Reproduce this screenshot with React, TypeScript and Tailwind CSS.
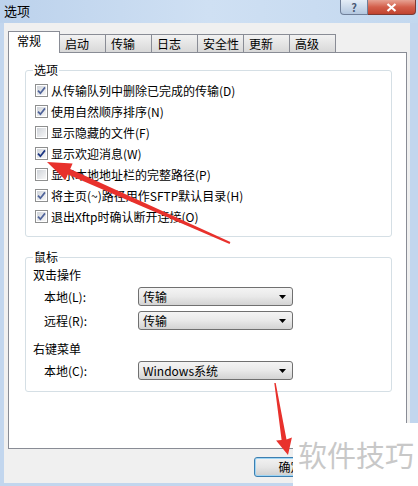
import React from 'react';

const tabs = ['常规', '启动', '传输', '日志', '安全性', '更新', '高级'];

const options = [
  { label: '从传输队列中删除已完成的传输(D)', checked: true },
  { label: '使用自然顺序排序(N)', checked: true },
  { label: '显示隐藏的文件(F)', checked: false },
  { label: '显示欢迎消息(W)', checked: true, focus: true },
  { label: '显示本地地址栏的完整路径(P)', checked: false },
  { label: '将主页(~)路径用作SFTP默认目录(H)', checked: true },
  { label: '退出Xftp时确认断开连接(O)', checked: true },
];

const CheckBox: React.FC<{ checked: boolean; focus?: boolean }> = ({ checked, focus }) => (
  <span className="w-[13px] h-[13px] shrink-0 border border-[#8e8f8f] bg-white p-[1px]">
    <span className="flex w-full h-full items-center justify-center bg-linear-to-br from-[#cfd3d9] to-[#f7f7f7]">
      {checked && (
        <svg width="9" height="9" viewBox="0 0 9 9">
          <path
            d="M1 4.6 L3.4 7.2 L8 1.4"
            fill="none"
            stroke={focus ? '#1c3682' : '#50649a'}
            strokeWidth="1.7"
          />
        </svg>
      )}
    </span>
  </span>
);

const ComboBox: React.FC<{ value: string }> = ({ value }) => (
  <div className="w-[155px] h-[19px] rounded-[3px] border border-[#707070] bg-linear-to-b from-[#f4f4f4] via-[#e9e9e9] to-[#d3d3d3] flex items-center pl-[4px] pr-[6px]">
    <span className="flex-1 text-[12px] leading-[14px]">{value}</span>
    <svg width="7" height="4" viewBox="0 0 7 4">
      <path d="M0 0 H7 L3.5 4 Z" fill="#000" />
    </svg>
  </div>
);

const SelectRow: React.FC<{ label: string; value: string; className?: string }> = ({ label, value, className }) => (
  <div className={`flex items-center h-[19px] ${className ?? ''}`}>
    <span className="w-[105px] pl-[11px] text-[12px]">{label}</span>
    <ComboBox value={value} />
  </div>
);

const App: React.FC = () => {
  return (
    <div className="relative w-[418px] h-[486px] overflow-hidden bg-[#c2d6ee] font-['Noto_Sans_CJK_SC',sans-serif] text-black flex flex-col">
      {/* title bar */}
      <div className="h-[23px] flex items-start bg-linear-to-r from-[#bcd2ec] via-[#cfe0f3] to-[#c3d8ef]">
        <span className="pl-[4px] pt-[3px] text-[13px] leading-[16px]">选项</span>
        <div className="ml-auto mr-[2px] flex">
          <div className="w-[28px] h-[15px] rounded-bl-[4px] border border-t-0 border-[#6f7f99] bg-linear-to-b from-[#e4edf7] to-[#b3c7df] flex items-center justify-center text-[11px] leading-none text-[#4a5a75] font-bold">
            ?
          </div>
          <div className="w-[48px] h-[15px] rounded-br-[4px] border border-l-0 border-t-0 border-[#7d3a32] bg-linear-to-b from-[#e6a293] via-[#d35f4b] to-[#c0432f] flex items-center justify-center">
            <svg width="11" height="9" viewBox="0 0 11 9">
              <path d="M1.5 1 L9.5 8 M9.5 1 L1.5 8" stroke="#fff" strokeWidth="2.2" />
            </svg>
          </div>
        </div>
      </div>

      {/* dialog body */}
      <div className="ml-[4px] w-[406px] h-[460px] bg-[#f0f0f0] pt-[8px] pl-[4px] pr-[3px] flex flex-col">
        {/* tabs */}
        <div className="h-[21px] flex items-end">
          {tabs.map((t, i) =>
            i === 0 ? (
              <div
                key={t}
                className="relative z-10 -mb-px w-[52px] h-[22px] bg-white border border-b-0 border-[#898c95] pl-[8px] pt-[1px] text-[12px] leading-[16px]"
              >
                {t}
              </div>
            ) : (
              <div
                key={t}
                className="w-[47px] h-[18px] -ml-px first:ml-0 border border-b-0 border-[#898c95] bg-linear-to-b from-[#f2f2f2] to-[#d8d8d8] pl-[5px] text-[12px] leading-[17px]"
              >
                {t}
              </div>
            )
          )}
        </div>

        {/* tab panel */}
        <div className="h-[397px] bg-white border border-[#898c95] pt-[10px] pl-[16px] pr-[14px]">
          <fieldset className="border border-[#d5dfe5] rounded-[3px] pl-[7px] pb-[9px]">
            <legend className="px-[1px] text-[12px] leading-[14px]">选项</legend>
            <div className="mt-[3px] flex flex-col">
              {options.map(o => (
                <div key={o.label} className="h-[21px] flex items-center gap-[3px] pl-[2px]">
                  <CheckBox checked={o.checked} focus={o.focus} />
                  <span className="text-[12px] leading-[14px]">{o.label}</span>
                </div>
              ))}
            </div>
          </fieldset>

          <fieldset className="mt-[13px] border border-[#d5dfe5] rounded-[3px] pl-[7px] pb-[11px]">
            <legend className="px-[1px] text-[12px] leading-[14px]">鼠标</legend>
            <div className="mt-[1px] h-[20px] flex items-center text-[12px]">双击操作</div>
            <SelectRow className="mt-[2px]" label="本地(L):" value="传输" />
            <SelectRow className="mt-[5px]" label="远程(R):" value="传输" />
            <div className="mt-[9px] h-[20px] flex items-center text-[12px]">右键菜单</div>
            <SelectRow className="mt-[2px]" label="本地(C):" value="Windows系统" />
          </fieldset>
        </div>

        {/* buttons (the rest is hidden under the watermark) */}
        <div className="mt-[8px] flex justify-end pr-[80px]">
          <button className="w-[73px] h-[20px] rounded-[3px] border border-[#3c7fb1] bg-linear-to-b from-[#f2f2f2] via-[#e6e6e6] to-[#cfcfcf] text-[12px] leading-[14px] shadow-[inset_0_0_0_1px_#9fd5f4]">
            确定
          </button>
        </div>
      </div>

      {/* red annotation arrows */}
      <svg className="absolute inset-0 pointer-events-none" width="418" height="486" viewBox="0 0 418 486">
        <polygon
          points="230.4,242.1 229.6,243.9 67.8,174.4 65.4,179.9 47,162 72.6,163.5 70.2,169"
          fill="#e8312c"
        />
        <polygon
          points="274.3,383.1 275.7,382.9 286.5,439.4 291.9,437.6 288,455 276.1,440.4 281.6,440"
          fill="#e8312c"
        />
      </svg>

      {/* watermark */}
      <div className="absolute left-[293px] top-[423px] w-[125px] h-[63px] bg-white flex items-center pl-[5px]">
        <span className="text-[29px] leading-none text-[#c8c8c8]">软件技巧</span>
      </div>
    </div>
  );
};

export default App;
